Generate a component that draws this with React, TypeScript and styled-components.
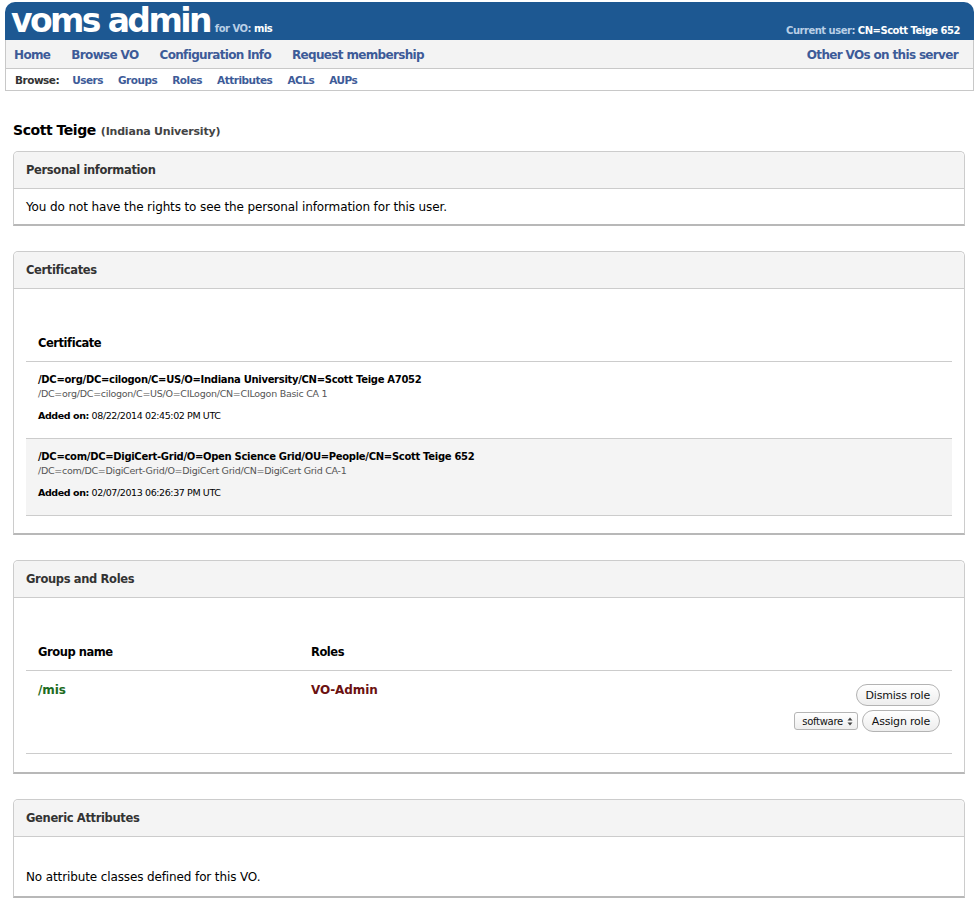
import React from "react";
import styled, { createGlobalStyle } from "styled-components";

const FONT = '"DejaVu Sans", "Lucida Grande", sans-serif';

const Global = createGlobalStyle`
  html, body { margin: 0; padding: 0; background: #fff; }
  body { font-family: ${FONT}; color: #000; }
  * { box-sizing: border-box; }
`;

const Page = styled.div`
  padding: 2px 5px 0 5px;
`;

const Header = styled.header`
  background: #1d5892;
  height: 38px;
  border-radius: 10px 10px 0 0;
  display: flex;
  align-items: flex-end;
  justify-content: space-between;
  padding: 0 14px 4px 6px;
  color: #fff;
`;

const Brand = styled.div`
  display: flex;
  align-items: baseline;
  gap: 5px;
`;

const Title = styled.h1`
  margin: 0;
  font-size: 33px;
  line-height: 30px;
  font-weight: bold;
  letter-spacing: -2.6px;
  color: #fff;
`;

const SmallInfo = styled.span`
  font-size: 10px;
  font-weight: bold;
  color: #b9cfe6;
  letter-spacing: -0.5px;
  b { color: #fff; }
`;

const Nav = styled.nav`
  background: #f3f3f3;
  border: 1px solid #c8c8c8;
  border-top: none;
  height: 29px;
  display: flex;
  align-items: center;
  justify-content: space-between;
  padding: 1px 15px 0 8px;
`;

const NavGroup = styled.div`
  display: flex;
  gap: 21px;
`;

const NavLink = styled.a`
  font-size: 12px;
  font-weight: bold;
  color: #3d5b98;
  text-decoration: none;
  letter-spacing: -0.66px;
`;

const SubNav = styled.div`
  border: 1px solid #c8c8c8;
  border-top: none;
  height: 22px;
  display: flex;
  align-items: center;
  gap: 15px;
  padding: 0 9px;
`;

const SubLabel = styled.span`
  font-size: 10.5px;
  font-weight: bold;
  color: #333;
  letter-spacing: -0.5px;
  margin-right: -2px;
`;

const SubLink = styled.a`
  font-size: 10.5px;
  font-weight: bold;
  color: #3d5b98;
  text-decoration: none;
  letter-spacing: -0.5px;
`;

const Main = styled.main`
  padding: 0 9px 0 8px;
`;

const UserName = styled.h2`
  margin: 30px 0 10px 0;
  font-size: 14px;
  line-height: 18px;
  font-weight: bold;
  letter-spacing: -0.45px;
  small {
    font-size: 11px;
    color: #444;
    margin-left: 5px;
    letter-spacing: -0.2px;
  }
`;

const Panel = styled.section`
  border: 1px solid #cccccc;
  border-bottom: 2px solid #b8b8b8;
  border-radius: 5px 5px 0 0;
  margin-bottom: 25px;
  background: #fff;
`;

const PanelHead = styled.div`
  background: #f4f4f4;
  border-bottom: 1px solid #cccccc;
  border-radius: 5px 5px 0 0;
  height: 37px;
  display: flex;
  align-items: center;
  padding: 0 12px;
  font-size: 11.5px;
  font-weight: bold;
  color: #333;
  letter-spacing: -0.35px;
`;

const PanelBody = styled.div<{ $pad: string }>`
  padding: ${(p) => p.$pad};
  font-size: 12px;
  line-height: 17px;
  letter-spacing: -0.12px;
`;

const Table = styled.table`
  width: 100%;
  border-collapse: collapse;
`;

const Th = styled.th<{ $w?: string }>`
  text-align: left;
  font-size: 11.5px;
  font-weight: bold;
  line-height: 18px;
  padding: 10px 12px 9px;
  border-bottom: 1px solid #cccccc;
  letter-spacing: -0.45px;
  width: ${(p) => p.$w || "auto"};
`;

const Tr = styled.tr<{ $alt?: boolean }>`
  background: ${(p) => (p.$alt ? "#f4f4f4" : "#fff")};
  td { border-bottom: 1px solid #cccccc; }
`;

const Td = styled.td<{ $right?: boolean; $pad?: string }>`
  vertical-align: top;
  padding: ${(p) => p.$pad || "11px 12px 15px"};
  text-align: ${(p) => (p.$right ? "right" : "left")};
`;

const Dn = styled.div`
  font-size: 10px;
  font-weight: bold;
  line-height: 14px;
  letter-spacing: -0.3px;
`;

const Ca = styled.div`
  font-size: 9.5px;
  line-height: 14px;
  color: #555;
  letter-spacing: -0.27px;
`;

const Added = styled.div`
  font-size: 9.5px;
  line-height: 14px;
  margin-top: 8px;
  letter-spacing: -0.4px;
  b { font-weight: bold; }
`;

const GroupName = styled.span`
  font-size: 12px;
  font-weight: bold;
  line-height: 18px;
  color: #1e6b1e;
`;

const RoleName = styled.span`
  font-size: 12px;
  font-weight: bold;
  line-height: 18px;
  color: #6b1111;
`;

const ActionRow = styled.div`
  display: flex;
  justify-content: flex-end;
  align-items: center;
  gap: 4px;
  & + & { margin-top: 4px; }
`;

const PillButton = styled.button`
  height: 22px;
  padding: 0 9px;
  border: 1px solid #b3b3b3;
  border-radius: 11px;
  background: linear-gradient(#ffffff, #ededed);
  font-family: ${FONT};
  font-size: 11px;
  letter-spacing: -0.2px;
  color: #111;
`;

const SelectBox = styled.span`
  display: inline-flex;
  align-items: center;
  gap: 4px;
  height: 18px;
  padding: 0 4px 0 7px;
  border: 1px solid #b5b5b5;
  border-radius: 3px;
  background: linear-gradient(#ffffff, #eeeeee);
  font-size: 10px;
  letter-spacing: -0.3px;
  color: #111;
`;

const Note = styled.p`
  margin: 0;
`;

function Arrows() {
  return (
    <svg width="6" height="9" viewBox="0 0 6 9">
      <path d="M3 0.5 L5.5 3.5 H0.5 Z" fill="#444" />
      <path d="M3 8.5 L5.5 5.5 H0.5 Z" fill="#444" />
    </svg>
  );
}

export default function App() {
  return (
    <>
      <Global />
      <Page>
        <Header>
          <Brand>
            <Title>voms admin</Title>
            <SmallInfo>
              for VO: <b>mis</b>
            </SmallInfo>
          </Brand>
          <SmallInfo>
            Current user: <b>CN=Scott Teige 652</b>
          </SmallInfo>
        </Header>
        <Nav>
          <NavGroup>
            <NavLink href="#">Home</NavLink>
            <NavLink href="#">Browse VO</NavLink>
            <NavLink href="#">Configuration Info</NavLink>
            <NavLink href="#">Request membership</NavLink>
          </NavGroup>
          <NavLink href="#">Other VOs on this server</NavLink>
        </Nav>
        <SubNav>
          <SubLabel>Browse:</SubLabel>
          <SubLink href="#">Users</SubLink>
          <SubLink href="#">Groups</SubLink>
          <SubLink href="#">Roles</SubLink>
          <SubLink href="#">Attributes</SubLink>
          <SubLink href="#">ACLs</SubLink>
          <SubLink href="#">AUPs</SubLink>
        </SubNav>
        <Main>
          <UserName>
            Scott Teige<small>(Indiana University)</small>
          </UserName>

          <Panel>
            <PanelHead>Personal information</PanelHead>
            <PanelBody $pad="10px 12px 8px">
              <Note>You do not have the rights to see the personal information for this user.</Note>
            </PanelBody>
          </Panel>

          <Panel>
            <PanelHead>Certificates</PanelHead>
            <PanelBody $pad="35px 12px 17px">
              <Table>
                <thead>
                  <tr>
                    <Th>Certificate</Th>
                  </tr>
                </thead>
                <tbody>
                  <Tr>
                    <Td>
                      <Dn>/DC=org/DC=cilogon/C=US/O=Indiana University/CN=Scott Teige A7052</Dn>
                      <Ca>/DC=org/DC=cilogon/C=US/O=CILogon/CN=CILogon Basic CA 1</Ca>
                      <Added>
                        <b>Added on:</b> 08/22/2014 02:45:02 PM UTC
                      </Added>
                    </Td>
                  </Tr>
                  <Tr $alt>
                    <Td>
                      <Dn>/DC=com/DC=DigiCert-Grid/O=Open Science Grid/OU=People/CN=Scott Teige 652</Dn>
                      <Ca>/DC=com/DC=DigiCert-Grid/O=DigiCert Grid/CN=DigiCert Grid CA-1</Ca>
                      <Added>
                        <b>Added on:</b> 02/07/2013 06:26:37 PM UTC
                      </Added>
                    </Td>
                  </Tr>
                </tbody>
              </Table>
            </PanelBody>
          </Panel>

          <Panel>
            <PanelHead>Groups and Roles</PanelHead>
            <PanelBody $pad="35px 12px 18px">
              <Table>
                <thead>
                  <tr>
                    <Th $w="273px">Group name</Th>
                    <Th>Roles</Th>
                    <Th></Th>
                  </tr>
                </thead>
                <tbody>
                  <Tr>
                    <Td $pad="10px 12px 10px">
                      <GroupName>/mis</GroupName>
                    </Td>
                    <Td $pad="10px 12px 10px">
                      <RoleName>VO-Admin</RoleName>
                    </Td>
                    <Td $right $pad="13px 12px 21px">
                      <ActionRow>
                        <PillButton>Dismiss role</PillButton>
                      </ActionRow>
                      <ActionRow>
                        <SelectBox>
                          software <Arrows />
                        </SelectBox>
                        <PillButton>Assign role</PillButton>
                      </ActionRow>
                    </Td>
                  </Tr>
                </tbody>
              </Table>
            </PanelBody>
          </Panel>

          <Panel>
            <PanelHead>Generic Attributes</PanelHead>
            <PanelBody $pad="32px 12px 10px">
              <Note>No attribute classes defined for this VO.</Note>
            </PanelBody>
          </Panel>
        </Main>
      </Page>
    </>
  );
}
